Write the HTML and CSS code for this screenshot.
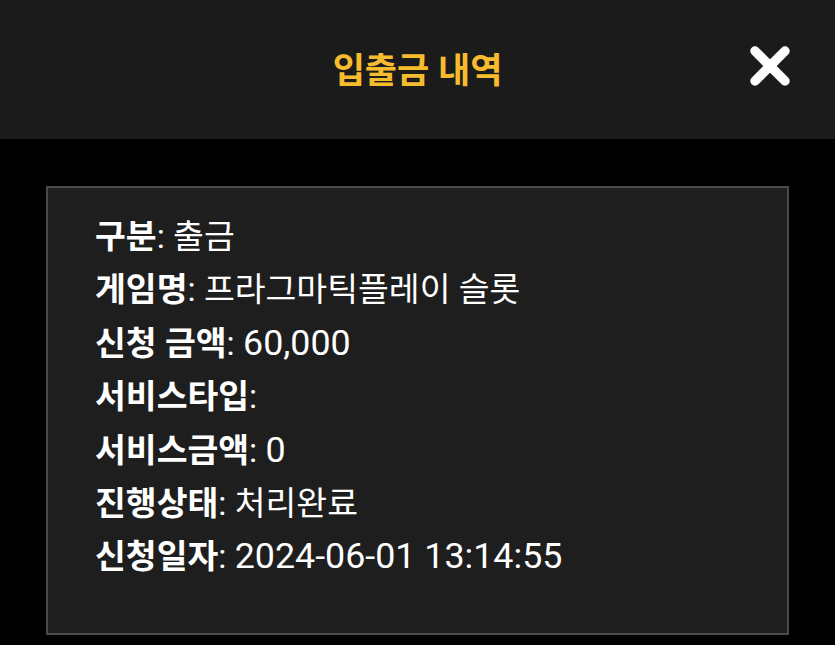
FILE: index.html
```html
<!DOCTYPE html>
<html lang="ko">
<head>
<meta charset="utf-8">
<link rel="stylesheet" href="styles.css">
</head>
<body>
<header class="header">
  <h1 class="title">입출금 내역</h1>
  <button class="close" aria-label="닫기">
    <svg width="40" height="40" viewBox="0 0 40 40"><path d="M5 5 L35 35 M35 5 L5 35" stroke="#fff" stroke-width="9.5" stroke-linecap="round" fill="none"/></svg>
  </button>
</header>
<main class="content">
  <section class="box">
    <p class="row"><b>구분</b>: 출금</p>
    <p class="row"><b>게임명</b>: 프라그마틱플레이 슬롯</p>
    <p class="row"><b>신청 금액</b>: <span class="num">60,000</span></p>
    <p class="row"><b>서비스타입</b>:</p>
    <p class="row"><b>서비스금액</b>: <span class="num">0</span></p>
    <p class="row"><b>진행상태</b>: 처리완료</p>
    <p class="row"><b>신청일자</b>: <span class="num">2024-06-01 13:14:55</span></p>
  </section>
</main>
</body>
</html>
```
FILE: styles.css
```css
html, body {
  margin: 0;
  padding: 0;
  background: #000;
  font-family: Roboto, "Noto Sans CJK KR", sans-serif;
  color: #fff;
}
.header {
  height: 139px;
  background: #1b1b1b;
  display: flex;
  align-items: center;
  justify-content: center;
  position: relative;
}
.title {
  margin: 0;
  font-size: 35px;
  font-weight: 700;
  color: #f7bc2d;
  padding-bottom: 4px;
}
.close {
  position: absolute;
  right: 45px;
  top: 46px;
  width: 40px;
  height: 40px;
  padding: 0;
  border: 0;
  background: none;
}
.close svg { display: block; }
.content {
  padding: 47px 46px 10px;
}
.box {
  background: #1e1e1e;
  border: 2px solid #4a4a4a;
  height: 449px;
  box-sizing: border-box;
  padding: 22px 47px 0;
}
.row {
  margin: 0;
  font-size: 33.5px;
  line-height: 53.4px;
  white-space: nowrap;
}
.row b { font-weight: 700; }
.num { font-size: 35.8px; }
```
